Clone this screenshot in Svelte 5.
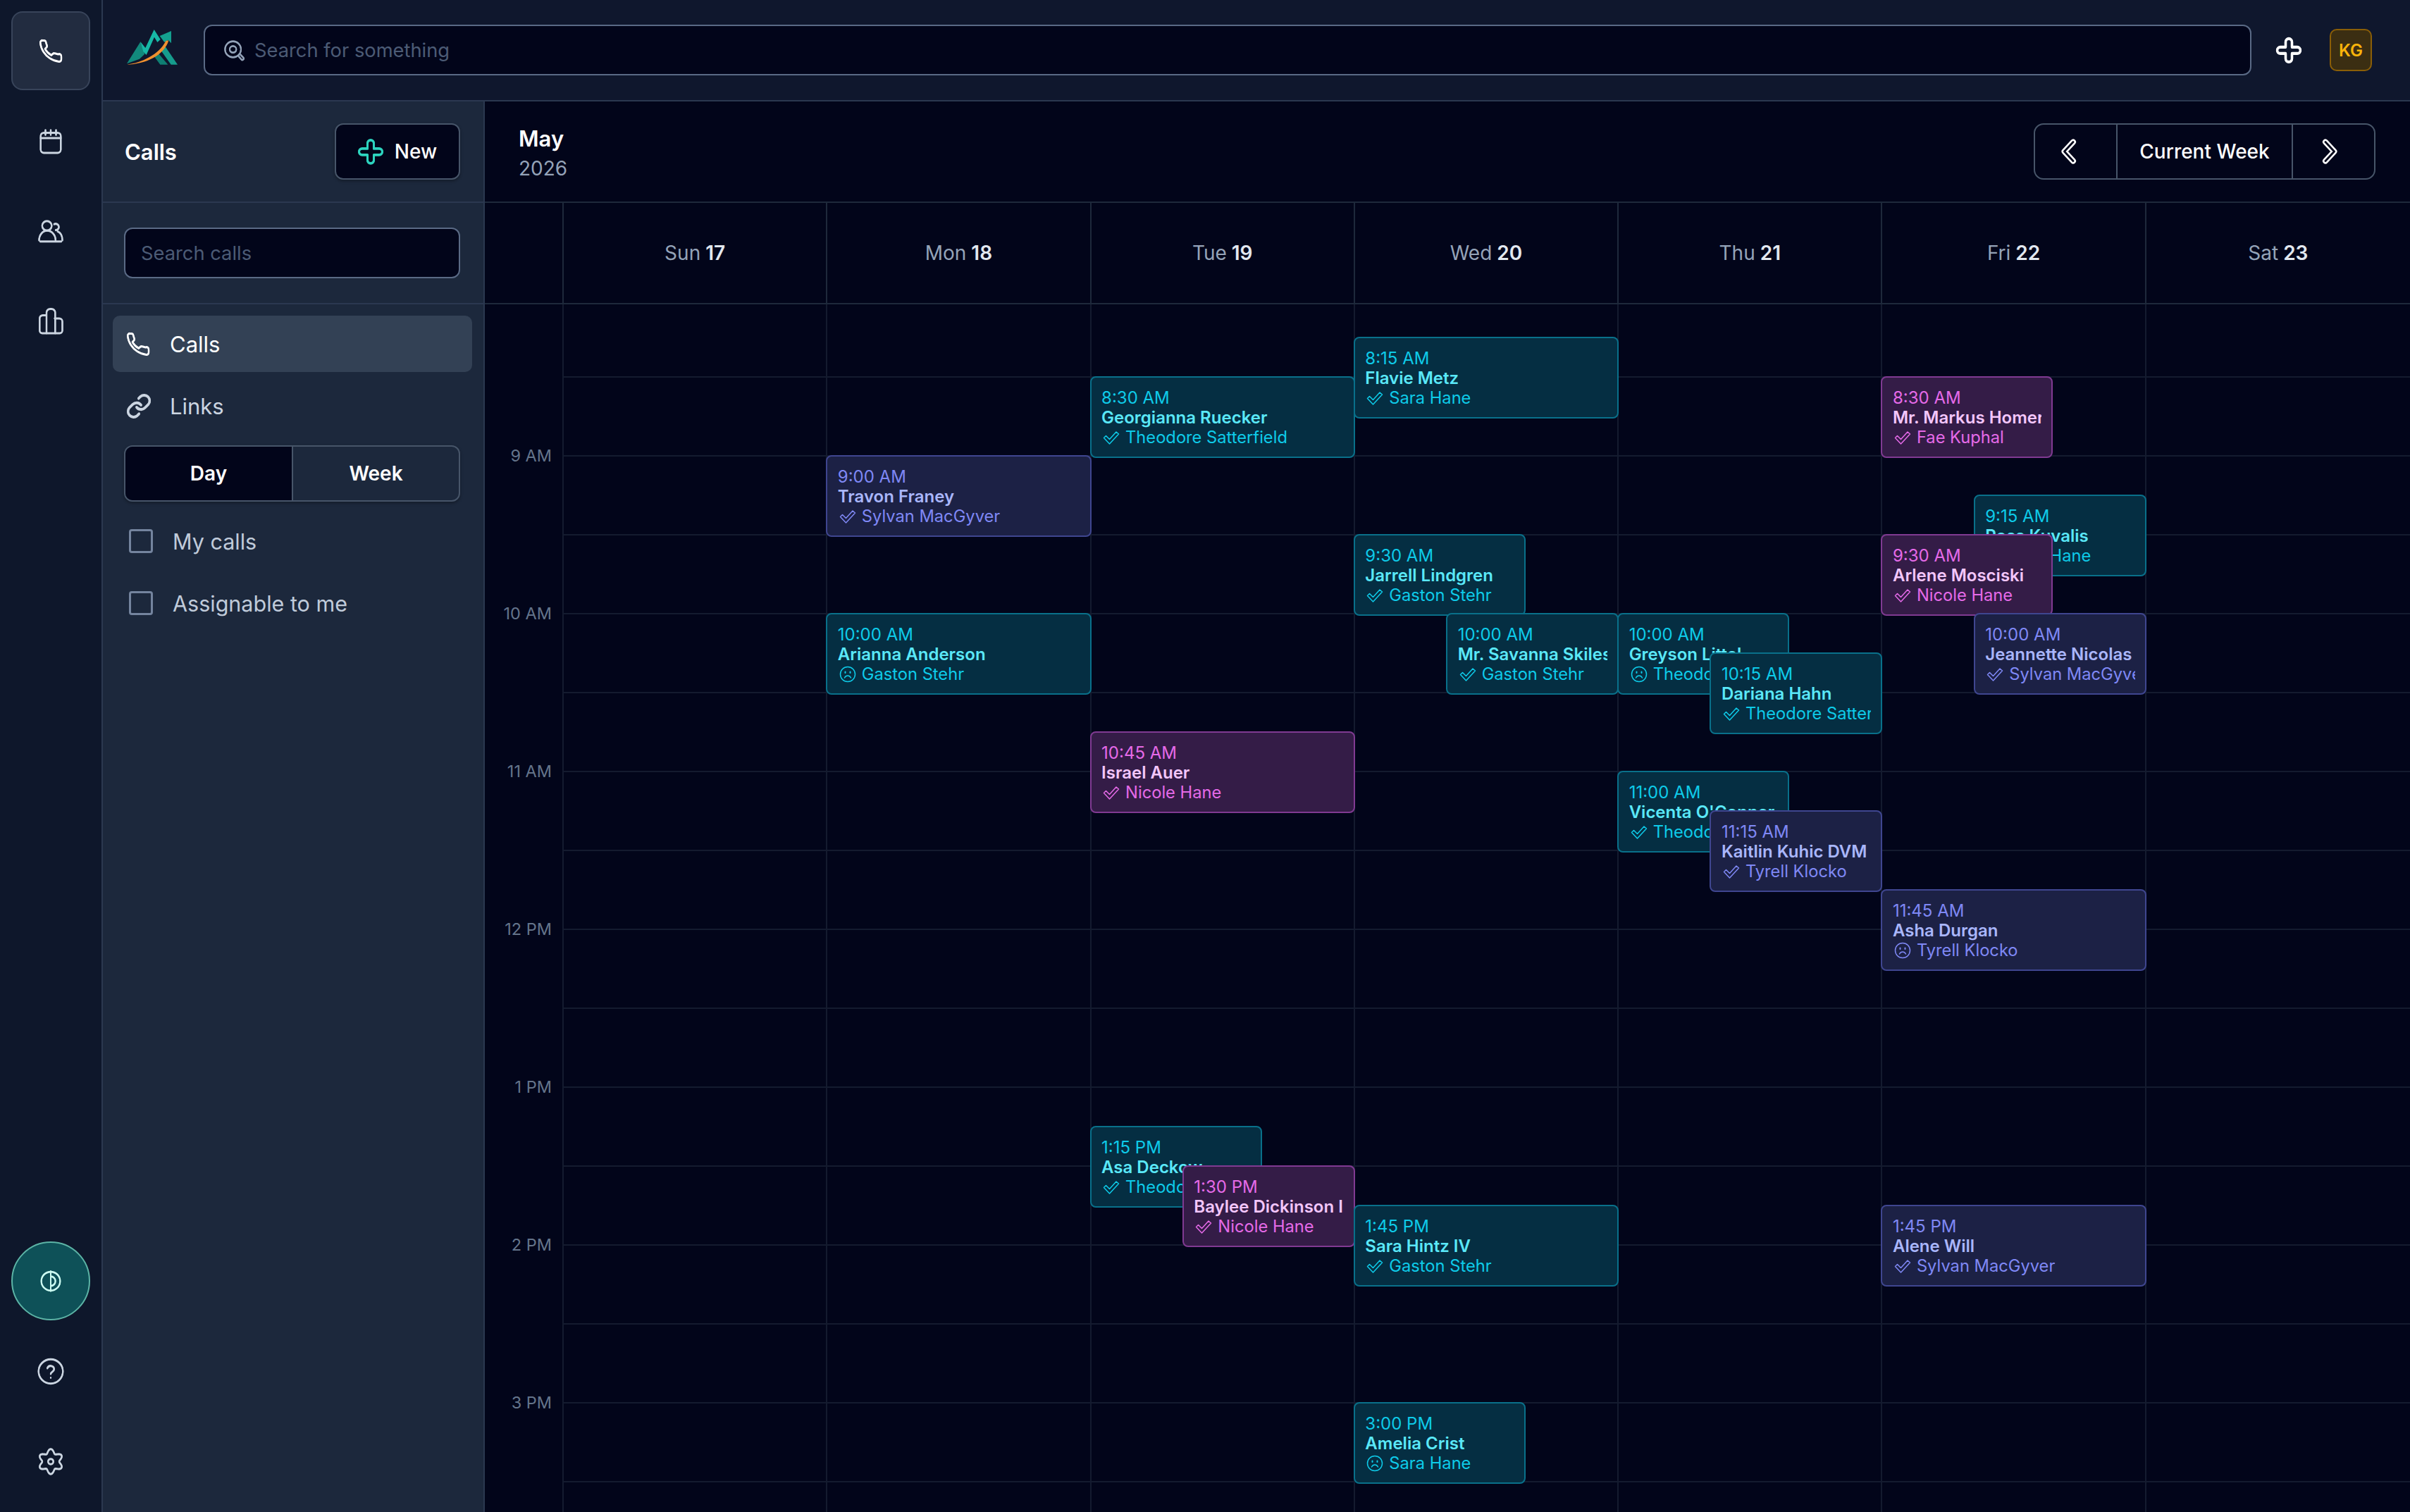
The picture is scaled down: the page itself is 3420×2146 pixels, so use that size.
<script>
  const H = 224;
  const gearD = (() => {
    let d = '';
    for (let i = 0; i <= 144; i++) {
      const t = (i / 144) * Math.PI * 2;
      const r = 9.9 - 1.9 * Math.cos(6 * t);
      d += (i ? 'L' : 'M') + (12 + r * Math.cos(t)).toFixed(2) + ' ' + (12 + r * Math.sin(t)).toFixed(2);
    }
    return d + 'Z';
  })();
  const plus = 'M9 4a3 3 0 0 1 6 0v5h5a3 3 0 0 1 0 6h-5v5a3 3 0 0 1-6 0v-5H4a3 3 0 0 1 0-6h5z';
  const icons = {
    phone: ['M22 17v3a2 2 0 0 1-2.2 2 19.8 19.8 0 0 1-8.6-3.1 19.5 19.5 0 0 1-6-6A19.8 19.8 0 0 1 2.1 4.2 2 2 0 0 1 4.1 2h1.6a2 2 0 0 1 1.8 1.7c.1 1 .5 2 .9 2.9a2 2 0 0 1-.5 2.1l-1.3 1.3a16 16 0 0 0 6 6l1.3-1.3a2 2 0 0 1 2.1-.4c1 .3 2 .6 3 .8A2 2 0 0 1 22 17z'],
    calendar: ['M5.5 4h13A3 3 0 0 1 21.500 7v13a3 3 0 0 1-3 3h-13a3 3 0 0 1-3-3V7a3 3 0 0 1 3-3z', 'M2.500 9h19', 'M7 1.500V6', 'M12 1.500V6', 'M17 1.500V6'],
    users: ['M8.400 2.200a4.500 4.500 0 1 1 0 9 4.500 4.500 0 0 1 0-9z', 'M15.200 5.200a3 3 0 1 1 1.500 5.600', 'M1 20.500c0-5 3.300-9.300 7.600-9.300s8 4.300 8 9.300', 'M18.500 12c2.800 1.200 4.500 4.500 4.500 8.500', 'M2 21.500h20'],
    chart: ['M8 23V3.500A3.500 3.500 0 0 1 11.500 0h1.200a3.500 3.500 0 0 1 3.500 3.500V23', 'M8 6H4.500a3 3 0 0 0-3 3v11.500a2.500 2.500 0 0 0 2.500 2.500h16.500a2.500 2.500 0 0 0 2.500-2.500V12a3 3 0 0 0-3-3h-4.300'],
    theme: ['M12 2a10 10 0 1 1 0 20 10 10 0 0 1 0-20z', 'M12 1.500v21', 'M12 7a5 5 0 0 1 0 10'],
    help: ['M12 .5a11.500 11.500 0 1 1 0 23 11.500 11.500 0 0 1 0-23z', 'M8.800 9a3.300 3.300 0 0 1 6.400 1c0 2.200-3.200 2.600-3.200 4.500', 'M12 18h.01'],
    gear: [gearD, 'M12 9.500a2.500 2.500 0 1 1 0 5 2.500 2.500 0 0 1 0-5z'],
    links: ['M10 13a5 5 0 0 0 7.500.5l3-3a5 5 0 0 0-7-7.100l-1.700 1.700', 'M14 11a5 5 0 0 0-7.500-.5l-3 3a5 5 0 0 0 7 7.100l1.700-1.700'],
    plus: [plus],
    search: ['M11 2.500a8.500 8.500 0 1 1 0 17 8.500 8.500 0 0 1 0-17z', 'M11 7.500a3.500 3.500 0 1 1 0 7 3.500 3.500 0 0 1 0-7z', 'M17 18.500l2.800 3.200a1.400 1.400 0 0 0 2.200-1.900l-3-3.100']
  };
  const nav = [
    { icon: 'calendar' }, { icon: 'users' }, { icon: 'chart' }
  ];
  const days = [['Sun', 17], ['Mon', 18], ['Tue', 19], ['Wed', 20], ['Thu', 21], ['Fri', 22], ['Sat', 23]];
  const hours = ['9 AM', '10 AM', '11 AM', '12 PM', '1 PM', '2 PM', '3 PM'];
  const m = (h, mi) => h * 60 + mi;
  const events = [
    [1, m(9, 0), '9:00 AM', 'Travon Franey', 'Sylvan MacGyver', 'indigo', 'check', 'full'],
    [1, m(10, 0), '10:00 AM', 'Arianna Anderson', 'Gaston Stehr', 'cyan', 'frown', 'full'],
    [2, m(8, 30), '8:30 AM', 'Georgianna Ruecker', 'Theodore Satterfield', 'cyan', 'check', 'full'],
    [2, m(10, 45), '10:45 AM', 'Israel Auer', 'Nicole Hane', 'pink', 'check', 'full'],
    [2, m(13, 15), '1:15 PM', 'Asa Deckow', 'Theodore Satterfield', 'cyan', 'check', 'left'],
    [2, m(13, 30), '1:30 PM', 'Baylee Dickinson II', 'Nicole Hane', 'pink', 'check', 'right'],
    [3, m(8, 15), '8:15 AM', 'Flavie Metz', 'Sara Hane', 'cyan', 'check', 'full'],
    [3, m(9, 30), '9:30 AM', 'Jarrell Lindgren', 'Gaston Stehr', 'cyan', 'check', 'left'],
    [3, m(10, 0), '10:00 AM', 'Mr. Savanna Skiles', 'Gaston Stehr', 'cyan', 'check', 'right'],
    [3, m(13, 45), '1:45 PM', 'Sara Hintz IV', 'Gaston Stehr', 'cyan', 'check', 'full'],
    [3, m(15, 0), '3:00 PM', 'Amelia Crist', 'Sara Hane', 'cyan', 'frown', 'left'],
    [4, m(10, 0), '10:00 AM', 'Greyson Littel', 'Theodore Satterfield', 'cyan', 'frown', 'left'],
    [4, m(10, 15), '10:15 AM', 'Dariana Hahn', 'Theodore Satterfield', 'cyan', 'check', 'right'],
    [4, m(11, 0), '11:00 AM', "Vicenta O'Conner", 'Theodore Satterfield', 'cyan', 'check', 'left'],
    [4, m(11, 15), '11:15 AM', 'Kaitlin Kuhic DVM', 'Tyrell Klocko', 'indigo', 'check', 'right'],
    [5, m(8, 30), '8:30 AM', 'Mr. Markus Homer', 'Fae Kuphal', 'pink', 'check', 'left'],
    [5, m(9, 15), '9:15 AM', 'Ross Kuvalis', 'Sara Hane', 'cyan', 'check', 'right'],
    [5, m(9, 30), '9:30 AM', 'Arlene Mosciski', 'Nicole Hane', 'pink', 'check', 'left'],
    [5, m(10, 0), '10:00 AM', 'Jeannette Nicolas', 'Sylvan MacGyver', 'indigo', 'check', 'right'],
    [5, m(11, 45), '11:45 AM', 'Asha Durgan', 'Tyrell Klocko', 'indigo', 'frown', 'full'],
    [5, m(13, 45), '1:45 PM', 'Alene Will', 'Sylvan MacGyver', 'indigo', 'check', 'full']
  ];
  const top = (min) => 102 + ((min - 510) * H) / 60;
  const inDay = (d) => events.filter((e) => e[0] === d);
</script>

{#snippet icon(name, cls = '')}
  <svg class="ic {cls}" viewBox="0 0 24 24" fill="none" stroke="currentColor" stroke-linecap="round" stroke-linejoin="round">
    {#each icons[name] as d}
      <path {d} />
      <path {d} class="shade" />
    {/each}
  </svg>
{/snippet}

<div class="app">
  <aside class="rail">
    <button class="rbtn active">{@render icon('phone')}</button>
    {#each nav as n}
      <button class="rbtn">{@render icon(n.icon)}</button>
    {/each}
    <button class="rbtn theme">{@render icon('theme', 'small')}</button>
    <button class="rbtn">{@render icon('help')}</button>
    <button class="rbtn">{@render icon('gear')}</button>
  </aside>

  <div class="main">
    <header class="topbar">
      <svg class="logo" viewBox="0 0 300 210">
        <polygon points="30,163 88,70 106,122 84,143" fill="#12897c" />
        <polygon points="88,70 109,96 146,18 173,60 160,72 147,50 113,126 100,112" fill="#17b8a6" />
        <polygon points="192,88 246,167 218,167 176,108" fill="#169c8d" />
        <polygon points="163,118 205,167 172,167 148,134" fill="#0f7f73" />
        <polygon points="170,45 219,24 219,76 206,62 190,72" fill="#14a08f" />
        <path d="M30 167C90 160 168 125 196 66L208 64C190 128 110 166 30 167Z" fill="#f0902f" />
      </svg>
      <div class="gsearch">
        {@render icon('search', 'sicon')}
        <span>Search for something</span>
      </div>
      {@render icon('plus', 'tplus')}
      <div class="avatar">KG</div>
    </header>

    <div class="body">
      <section class="side">
        <div class="shead">
          <h2>Calls</h2>
          <button class="new">{@render icon('plus', 'nplus')}<span>New</span></button>
        </div>
        <div class="ssearch"><div class="input">Search calls</div></div>
        <div class="items">
          <div class="item on">{@render icon('phone')}<span>Calls</span></div>
          <div class="item">{@render icon('links', 'lnk')}<span>Links</span></div>
          <div class="seg">
            <div class="segb sel">Day</div>
            <div class="segb">Week</div>
          </div>
          <label class="chk"><i></i><span>My calls</span></label>
          <label class="chk"><i></i><span>Assignable to me</span></label>
        </div>
      </section>

      <section class="cal">
        <div class="chead">
          <div class="month"><b>May</b><span>2026</span></div>
          <div class="pager">
            <button class="pg prev">
              <svg class="chev" viewBox="0 0 24 36" fill="none" stroke-linecap="round" stroke-linejoin="round">
                <path d="M18 4.500L5.500 18 18 31.500" stroke="#fff" stroke-width="8" />
                <path d="M18 4.500L5.500 18 18 31.500" stroke="#02051a" stroke-width="2.800" />
              </svg>
            </button>
            <button class="pg cur">Current Week</button>
            <button class="pg next">
              <svg class="chev" viewBox="0 0 24 36" fill="none" stroke-linecap="round" stroke-linejoin="round">
                <path d="M6 4.500L18.500 18 6 31.500" stroke="#fff" stroke-width="8" />
                <path d="M6 4.500L18.500 18 6 31.500" stroke="#02051a" stroke-width="2.800" />
              </svg>
            </button>
          </div>
        </div>

        <div class="dayrow">
          <div class="corner"></div>
          {#each days as d}
            <div class="dayh">{d[0]} <b>{d[1]}</b></div>
          {/each}
        </div>

        <div class="grid">
          <div class="gutter">
            {#each hours as h}
              <div class="hr">{h}</div>
            {/each}
          </div>
          {#each days as _, i}
            <div class="col">
              {#each inDay(i) as e}
                <article class="ev {e[5]} {e[7]}" style="top:{top(e[1])}px">
                  <div class="t">{e[2]}</div>
                  <div class="n">{e[3]}</div>
                  <div class="a">
                    {#if e[6] === 'check'}
                      <svg class="st" viewBox="0 0 28 24" fill="none" stroke="currentColor" stroke-width="1.500" stroke-linejoin="round">
                        <path d="M3.500 12.500l3-3 5 5 9.500-10.500 3.500 3L11.500 21z" />
                      </svg>
                    {:else}
                      <svg class="st" viewBox="0 0 28 24" fill="none" stroke="currentColor" stroke-width="1.500" stroke-linecap="round">
                        <circle cx="14" cy="12" r="10.500" />
                        <path d="M9.500 17c1-2 2.500-3 4.500-3s3.500 1 4.500 3" />
                        <path d="M10.500 8.500v1.500M17.500 8.500v1.500" stroke-width="2" />
                      </svg>
                    {/if}
                    <span>{e[4]}</span>
                  </div>
                </article>
              {/each}
            </div>
          {/each}
        </div>
      </section>
    </div>
  </div>
</div>

<style>
  :global(body) { margin: 0; background: #02051a; }
  * { box-sizing: border-box; }
  .app {
    display: grid; grid-template-columns: 146px 1fr; height: 2146px; overflow: hidden;
    font-family: Inter, "Liberation Sans", sans-serif; color: #fff; background: #02051a;
  }
  button { font: inherit; color: inherit; background: none; border: 0; padding: 0; }

  .rail {
    background: #0e172b; border-right: 2px solid #2b3850; padding: 16px; display: flex; flex-direction: column; gap: 16px;
  }
  .rbtn {
    width: 112px; height: 112px; flex: none; display: flex; align-items: center; justify-content: center;
    border: 2px solid transparent; border-radius: 16px; color: #cbd5e1;
  }
  .rbtn.active { background: #222c40; border-color: #38445a; color: #fff; }
  .rbtn.theme {
    margin-top: auto; border-radius: 50%; background: #0e5158; border-color: #5cb4a6; color: #ccfbf1;
  }
  .ic { width: 36px; height: 36px; stroke-width: 1.500; overflow: visible; flex: none; }
  .ic .shade { transform: translateY(0.55px); }
  .ic.small { width: 32px; height: 32px; }
  :global(.ic.lnk) { width: 38px !important; height: 38px !important; stroke-width: 2 !important; margin-right: -2px; }

  .main { display: flex; flex-direction: column; min-width: 0; }
  .topbar {
    height: 144px; flex: none; display: flex; align-items: center; padding: 0 54px 0 24px;
    background: #0f172d; border-bottom: 2px solid #2b3850;
  }
  .logo { width: 100px; height: 70px; flex: none; }
  .gsearch {
    flex: 1; height: 72px; margin-left: 19px; display: flex; align-items: center; gap: 13px; padding-left: 26px;
    background: #02051a; border: 2px solid #5a6a85; border-radius: 12px; font-size: 27.300px; color: #4c5b75;
  }
  .gsearch span, .input { padding-top: 1px; }
  :global(.sicon) { color: #94a3b8; width: 32px !important; height: 32px !important; margin-left: -1px; }
  :global(.tplus) { color: #fff; margin: 0 40px 0 35px; stroke-width: 2.200 !important; }
  .avatar {
    width: 60px; height: 60px; display: flex; align-items: center; justify-content: center;
    background: #3b2e12; border: 2px solid #8a5e07; border-radius: 10px; color: #fbb40a; font-size: 24px; font-weight: 600;
  }

  .body { flex: 1; display: flex; min-height: 0; }
  .side { width: 542px; flex: none; background: #1c283c; border-right: 2px solid #2b3850; }
  .shead {
    height: 144px; display: flex; align-items: center; justify-content: space-between; padding: 0 33px 0 31px;
    border-bottom: 2px solid #2b3850;
  }
  h2 { margin: 0; font-size: 31px; font-weight: 600; }
  .new {
    width: 178px; height: 80px; display: flex; align-items: center; justify-content: center; gap: 16px;
    background: #02051a; border: 2px solid #475569; border-radius: 12px; font-size: 28px; font-weight: 500;
    box-shadow: 0 2px 4px #0005;
  }
  :global(.nplus) { color: #2dd4bf; stroke-width: 2 !important; }
  .ssearch { height: 144px; padding: 35px 33px 0 30px; border-bottom: 2px solid #2b3850; }
  .input {
    height: 72px; display: flex; align-items: center; padding-left: 22px; background: #02051a;
    border: 2px solid #5a6a85; border-radius: 12px; font-size: 27.300px; color: #4c5b75;
  }
  .items { padding: 16px 16px 0 14px; display: flex; flex-direction: column; gap: 8px; }
  .item {
    height: 80px; display: flex; align-items: center; gap: 27px; padding-left: 18px; border-radius: 10px;
    font-size: 31px; color: #cbd5e1;
  }
  .item.on { background: #334155; color: #fff; }
  .seg {
    margin: 8px 17px 8px 16px; height: 80px; display: flex; border: 2px solid #475569; border-radius: 12px; overflow: hidden;
    box-shadow: 0 2px 4px #0005;
  }
  .segb {
    flex: 1; display: flex; align-items: center; justify-content: center; font-size: 28px; font-weight: 600;
  }
  .segb.sel { background: #02051a; border-right: 2px solid #475569; flex: 0 0 238px; }
  .chk { height: 80px; display: flex; align-items: center; gap: 28px; padding-left: 23px; font-size: 30.500px; color: #c0cbda; }
  .chk i { width: 34px; height: 34px; border: 3px solid #74849e; border-radius: 4px; }

  .cal { flex: 1; min-width: 0; display: flex; flex-direction: column; background: #02051a; }
  .chead {
    height: 144px; flex: none; display: flex; align-items: center; justify-content: space-between; padding: 0 49px 0 48px;
    border-bottom: 2px solid #1e293b;
  }
  .month { display: flex; flex-direction: column; gap: 6px; padding-top: 4px; }
  .month b { font-size: 31px; font-weight: 600; line-height: 38px; }
  .month span { font-size: 28px; line-height: 34px; color: #94a3b8; }
  .pager { display: flex; height: 80px; border: 2px solid #475569; border-radius: 14px; }
  .pg { width: 115px; display: flex; align-items: center; justify-content: center; }
  .pg.prev { padding-right: 20px; }
  .pg.next { padding-right: 12px; }
  .pg.cur { width: 251px; border-left: 2px solid #475569; border-right: 2px solid #475569; font-size: 28px; font-weight: 500; }
  .chev { width: 24px; height: 36px; }

  .dayrow, .grid { display: grid; grid-template-columns: 112px repeat(7, 1fr); }
  .dayrow { height: 144px; flex: none; border-bottom: 2px solid #1e293b; }
  .corner, .dayh { border-right: 2px solid #1e293b; }
  .dayh { display: flex; align-items: center; justify-content: center; gap: 7px; font-size: 28px; color: #94a3b8; }
  .dayh b { font-weight: 600; color: #e2e8f0; }
  .dayh:last-child { border-right: 0; }

  .grid { flex: 1; min-height: 0; overflow: hidden; }
  .gutter { border-right: 2px solid #141b2f; padding-top: 102px; }
  .hr {
    height: 224px; display: flex; align-items: center; justify-content: flex-end; padding-right: 15px;
    font-size: 23.500px; color: #64748b;
  }
  .col {
    position: relative; border-right: 2px solid #141b2f;
    background: linear-gradient(#141b2f 0 2px, transparent 2px) 0 102px / 100% 112px repeat-y;
    background-origin: border-box;
  }
  .col:last-child { border-right: 0; }

  .ev {
    position: absolute; height: 116px; padding: 15px 14px 13px 14.500px; border: 2px solid; border-radius: 8px;
    font-size: 24px; line-height: 28px; white-space: nowrap; overflow: hidden;
    display: flex; flex-direction: column;
  }
  .ev > div { overflow: hidden; }
  .ev.full { left: -2px; width: calc(100% + 4px); }
  .ev.left { left: -2px; width: calc(65% + 2px); }
  .ev.right { left: calc(35% - 1px); width: calc(65% + 3px); }
  .t { font-weight: 400; }
  .n { font-weight: 600; }
  .a { display: flex; align-items: center; gap: 6px; font-size: 23.700px; }
  .st { width: 28px; height: 24px; flex: none; }
  .cyan { background: #052e42; border-color: #09708a; color: #0ecbe9; }
  .cyan .n { color: #5ae8f8; }
  .indigo { background: #1c2145; border-color: #3f4690; color: #7f88f5; }
  .indigo .n { color: #a9b6fb; }
  .pink { background: #341c47; border-color: #803a92; color: #e56ae8; }
  .pink .n { color: #f3c6fb; }
</style>
